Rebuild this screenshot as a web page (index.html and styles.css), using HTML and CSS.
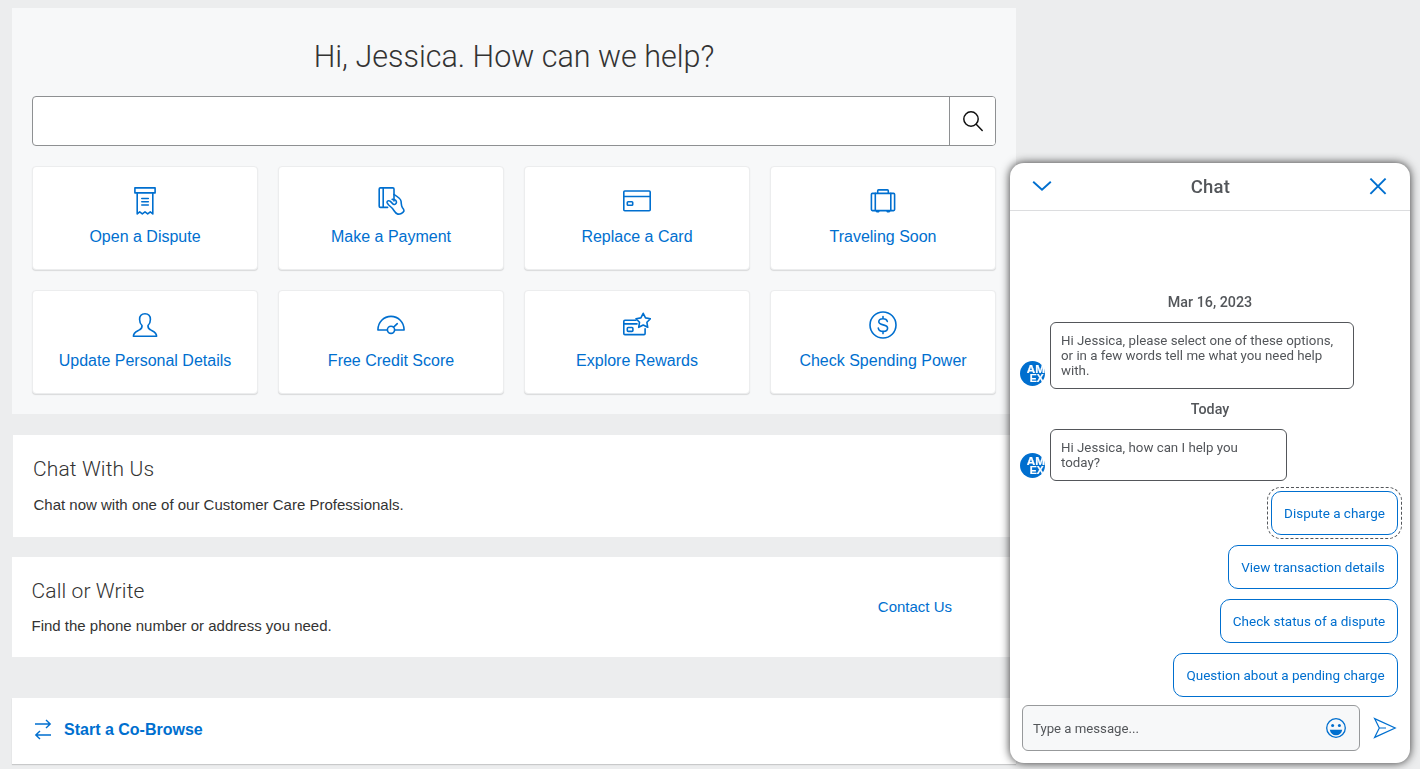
FILE: index.html
```html
<!DOCTYPE html>
<html lang="en">
<head>
<meta charset="utf-8">
<title>Help Center</title>
<link rel="stylesheet" href="styles.css">
</head>
<body>
<main class="page">
  <section class="hero">
    <h1 class="hero-title">Hi, Jessica. How can we help?</h1>
    <div class="search">
      <div class="search-field"></div>
      <button class="search-button" aria-label="Search">
        <svg width="24" height="24" viewBox="0 0 24 24" fill="none" stroke="#111" stroke-width="1.5" stroke-linecap="round"><circle cx="10" cy="10" r="7.2"/><path d="M15.2 15.2L21.2 21.4"/></svg>
      </button>
    </div>
    <div class="tiles">
      <a class="tile"><svg class="tile-icon" viewBox="0 0 28 28"><path d="M3.9 .9H24.1V5.9H3.9ZM6.2 5.9V26.9L8.7 24.9L11.3 26.9L14 24.9L16.7 26.9L19.3 24.9L21.8 26.9V5.9M10.8 11.5H17.3M10.8 14.7H17.3M10.8 18H17.3"/></svg><span>Open a Dispute</span></a>
      <a class="tile"><svg class="tile-icon" viewBox="0 0 28 28"><path d="M10.6 20.4H3.4Q2.2 20.4 2.2 19.2V2.1Q2.2 .9 3.4 .9H15.8Q17 .9 17 2.1V14M6.2 .9V20.4"/><path d="M17 7.5C20.5 9.6 23.6 11.4 24 14C24.5 17 24 18.5 25.5 20.8Q27.2 22.6 26.9 24.2C26 26 23 27.4 20.8 27.1C17.8 26.6 17.2 22.7 14.5 20.5C12.2 18.7 10.7 17.4 10.1 15.7C9.8 14 11.5 13.1 13.1 14.2L16.4 17.3C19 18.1 20.1 15.4 18.9 13.6C18.2 12.7 17.4 12.6 15.2 12.4"/></svg><span>Make a Payment</span></a>
      <a class="tile"><svg class="tile-icon" viewBox="0 0 28 28"><rect x=".8" y="4" width="26.4" height="19.8" rx="1"/><path d="M.8 9.5H27.2"/><rect x="4.3" y="14.7" width="5.4" height="3.6" rx=".8"/></svg><span>Replace a Card</span></a>
      <a class="tile"><svg class="tile-icon" viewBox="0 0 28 28"><rect x="2.4" y="6.4" width="23.2" height="17.2" rx="1"/><path d="M6.3 6.4V23.6M21.8 6.4V23.6M8.7 6.2V3.8Q8.7 2.9 9.6 2.9H18.4Q19.3 2.9 19.3 3.8V6.2M7.7 24.6H9.8M18.2 24.6H20.3"/></svg><span>Traveling Soon</span></a>
      <a class="tile"><svg class="tile-icon" viewBox="0 0 28 28"><path d="M14 2.7C17.3 2.7 19.4 4.3 19.4 8.4C19.4 11.3 18.2 13.4 17 14.5C16.8 16.5 17.7 17.8 19.3 18.7C21.8 20.3 25.6 20.9 25.6 25.3H2.4C2.4 20.9 6.2 20.3 8.7 18.7C10.3 17.8 11.2 16.5 11 14.5C9.8 13.4 8.6 11.3 8.6 8.4C8.6 4.3 10.7 2.7 14 2.7Z"/></svg><span>Update Personal Details</span></a>
      <a class="tile"><svg class="tile-icon" viewBox="0 0 28 28"><path d="M10.3 19H.9C.9 11 6.8 5.4 14 5.4S27.1 11 27.1 19H17.7M16.6 16.2L20.3 12.7"/><circle cx="14" cy="18.8" r="3.6"/></svg><span>Free Credit Score</span></a>
      <a class="tile"><svg class="tile-icon" viewBox="0 0 28 28"><path d="M13 9.3H1.9Q.8 9.3 .8 10.4V22.5Q.8 23.6 1.9 23.6H21Q22.1 23.6 22.1 22.5V17.7M.8 12.9H14"/><rect x="4.3" y="16.5" width="5.6" height="3.9" rx=".9"/><path d="M20.2 2.3L22.5 6.9L27.4 7.7L23.9 11.3L24.7 16.3L20.2 14L15.7 16.3L16.5 11.3L13 7.7L17.9 6.9Z"/></svg><span>Explore Rewards</span></a>
      <a class="tile"><svg class="tile-icon" viewBox="0 0 28 28"><circle cx="14" cy="14" r="13"/><path d="M18.3 10.4C17.8 8.6 16.2 7.7 14 7.7C11.6 7.7 9.8 8.9 9.8 10.8C9.8 15 18.6 12.7 18.6 17C18.6 19 16.7 20.4 14.2 20.4C11.5 20.4 9.6 19.2 9.3 17.1M14 5.5V7.7M14 20.4V22.6"/></svg><span>Check Spending Power</span></a>
    </div>
  </section>

  <section class="panel panel-chat">
    <h2 class="panel-title">Chat With Us</h2>
    <p class="panel-text">Chat now with one of our Customer Care Professionals.</p>
  </section>

  <section class="panel panel-contact">
    <div>
      <h2 class="panel-title">Call or Write</h2>
      <p class="panel-text">Find the phone number or address you need.</p>
    </div>
    <a class="contact-link">Contact Us</a>
  </section>

  <section class="panel panel-browse">
    <svg width="18" height="22" viewBox="0 0 18 22" fill="none" stroke="#006fcf" stroke-width="1.4"><path d="M1 5H16M12 .9L16.2 5L12 9.1M17 16H2M6 11.9L1.8 16L6 20.1"/></svg>
    <span>Start a Co-Browse</span>
  </section>
</main>

<aside class="chat">
  <header class="chat-header">
    <svg width="20" height="12" viewBox="0 0 20 12" fill="none" stroke="#006fcf" stroke-width="1.9"><path d="M1.2 .7L10 8.8L18.8 .7"/></svg>
    <h2 class="chat-title">Chat</h2>
    <svg width="18" height="18" viewBox="0 0 18 18" fill="none" stroke="#006fcf" stroke-width="1.9"><path d="M1.4 .6L16.6 15.8M16.6 .6L1.4 15.8"/></svg>
  </header>
  <div class="chat-log">
    <div class="chat-date">Mar 16, 2023</div>
    <div class="message">
      <svg class="avatar" viewBox="0 0 25 25"><circle cx="12.5" cy="12.5" r="12.5" fill="#006fcf"/><text x="6.8" y="12.1" textLength="18.2" lengthAdjust="spacingAndGlyphs">AM</text><text x="9.8" y="20.6" textLength="14" lengthAdjust="spacingAndGlyphs">EX</text></svg>
      <div class="bubble">Hi Jessica, please select one of these options,<br>or in a few words tell me what you need help<br>with.</div>
    </div>
    <div class="chat-date chat-date-today">Today</div>
    <div class="message">
      <svg class="avatar" viewBox="0 0 25 25"><circle cx="12.5" cy="12.5" r="12.5" fill="#006fcf"/><text x="6.8" y="12.1" textLength="18.2" lengthAdjust="spacingAndGlyphs">AM</text><text x="9.8" y="20.6" textLength="14" lengthAdjust="spacingAndGlyphs">EX</text></svg>
      <div class="bubble bubble-short">Hi Jessica, how can I help you<br>today?</div>
    </div>
    <div class="options">
      <button class="option option-focused option-dispute">Dispute a charge</button>
      <button class="option option-view">View transaction details</button>
      <button class="option option-status">Check status of a dispute</button>
      <button class="option option-pending">Question about a pending charge</button>
    </div>
  </div>
  <footer class="composer">
    <div class="composer-field">
      <span>Type a message...</span>
      <svg width="20" height="20" viewBox="0 0 20 20"><circle cx="10" cy="10" r="9.3" fill="none" stroke="#006fcf" stroke-width="1.3"/><circle cx="6.6" cy="7.4" r="1.5" fill="#006fcf"/><circle cx="13.4" cy="7.4" r="1.5" fill="#006fcf"/><path d="M3.8 11.8H16.2C15.6 15.4 13.3 17.3 10 17.3S4.4 15.4 3.8 11.8Z" fill="#006fcf"/></svg>
    </div>
    <svg width="24" height="22" viewBox="0 0 24 22" fill="none" stroke="#006fcf" stroke-width="1.2"><path d="M1.6 1.6L22.2 11L1.6 20.4L6.3 11ZM6.3 11H13"/></svg>
  </footer>
</aside>
</body>
</html>
```
FILE: styles.css
```css
* { box-sizing: border-box; }
html, body { height: 100%; }
body {
  margin: 0;
  overflow: hidden;
  background: #ecedee;
  color: #333;
  font-family: "Liberation Sans", Arial, sans-serif;
}
h1, h2, p { margin: 0; }
button { font: inherit; margin: 0; }
.page { width: 1004px; margin: 8px 0 0 12px; }

.hero { height: 406px; padding: 25px 20px 0; background: #f7f8f9; }
.hero-title {
  height: 63px;
  text-align: center;
  font: 300 30.5px/48px Roboto, sans-serif;
}
.search {
  display: flex;
  height: 50px;
  border: 1px solid #8e9092;
  border-radius: 4px;
  background: #fff;
  overflow: hidden;
}
.search-field { flex: 1; }
.search-button {
  width: 46px;
  padding: 0;
  border: 0;
  border-left: 1px solid #8e9092;
  background: #fff;
  display: flex;
  align-items: center;
  justify-content: center;
}
.tiles {
  display: grid;
  grid-template-columns: repeat(4, 226px);
  grid-auto-rows: 104px;
  gap: 20px;
  margin-top: 20px;
}
.tile {
  display: flex;
  flex-direction: column;
  align-items: center;
  gap: 12px;
  padding-top: 20px;
  border: 1px solid #ecedee;
  border-radius: 4px;
  background: #fff;
  box-shadow: 0 1px 1px rgba(0, 0, 0, .12);
  color: #006fcf;
  font-size: 16px;
  line-height: 20px;
}
.tile-icon {
  width: 28px;
  height: 28px;
  fill: none;
  stroke: #006fcf;
  stroke-width: 1.6;
  stroke-linejoin: round;
  stroke-linecap: round;
}

.panel { background: #fff; }
.panel-title { font: 300 21px/28px Roboto, sans-serif; letter-spacing: .12px; }
.panel-text { font-size: 15px; line-height: 20px; }
.panel-chat { height: 102px; margin: 21px 0 0 1px; padding: 20px; }
.panel-chat .panel-text { margin: 12px 0 0 .5px; }
.panel-contact {
  display: flex;
  justify-content: space-between;
  height: 100px;
  margin-top: 20px;
  padding: 20px 64px 0 19.5px;
}
.panel-contact .panel-text { margin-top: 11px; }
.contact-link { color: #006fcf; font-size: 15px; line-height: 20px; padding-top: 20px; }
.panel-browse {
  display: flex;
  align-items: center;
  gap: 12px;
  height: 66px;
  margin-top: 41px;
  padding: 0 22px 3px;
  box-shadow: 0 1px 1px rgba(0, 0, 0, .15);
  color: #006fcf;
  font-size: 16px;
  font-weight: 700;
}

.chat {
  position: fixed;
  left: 1010px;
  top: 163px;
  width: 400px;
  height: 600px;
  display: flex;
  flex-direction: column;
  border-radius: 14px;
  background: #fff;
  box-shadow: 0 0 10px rgba(0, 0, 0, .8);
  color: #53565a;
  font-family: Roboto, sans-serif;
}
.chat-header {
  display: flex;
  align-items: center;
  justify-content: space-between;
  height: 48px;
  padding: 0 23px 0 22px;
  border-bottom: 1px solid #dcdddf;
}
.chat-title { font-size: 18.5px; font-weight: 500; letter-spacing: .3px; }
.chat-log { flex: 1; padding: 82px 12px 0 10px; }
.chat-date {
  height: 29px;
  padding-left: 2px;
  text-align: center;
  font-size: 14.3px;
  font-weight: 500;
  line-height: 18px;
}
.chat-date-today { margin-top: 11px; }
.message { display: flex; align-items: flex-end; gap: 5px; }
.avatar { width: 25px; height: 25px; margin-bottom: 3px; }
.avatar text {
  fill: #fff;
  stroke: #fff;
  stroke-width: .2px;
  font: 700 10px "Liberation Sans", Arial, sans-serif;
}
.bubble {
  width: 304px;
  height: 67px;
  padding: 10px;
  border: 1px solid #53565a;
  border-radius: 6px;
  font-size: 13.3px;
  line-height: 15px;
  white-space: nowrap;
}
.bubble-short { width: 237px; height: 52px; }
.options {
  display: flex;
  flex-direction: column;
  align-items: flex-end;
  gap: 10px;
  margin-top: 10px;
}
.option {
  height: 44px;
  padding: 0;
  border: 1px solid #006fcf;
  border-radius: 10px;
  background: #fff;
  color: #006fcf;
  font-size: 13.5px;
}
.option-focused { outline: 1px dashed #53565a; outline-offset: 3px; }
.option-dispute { width: 127px; }
.option-view { width: 170px; }
.option-status { width: 178px; }
.option-pending { width: 225px; }
.composer {
  display: flex;
  align-items: center;
  gap: 13px;
  padding: 0 12px 12px;
}
.composer-field {
  display: flex;
  align-items: center;
  justify-content: space-between;
  width: 338px;
  height: 46px;
  padding: 0 13px 0 10px;
  border: 1px solid #97999b;
  border-radius: 6px;
  background: #f7f8f9;
  font-size: 13.2px;
}
```
